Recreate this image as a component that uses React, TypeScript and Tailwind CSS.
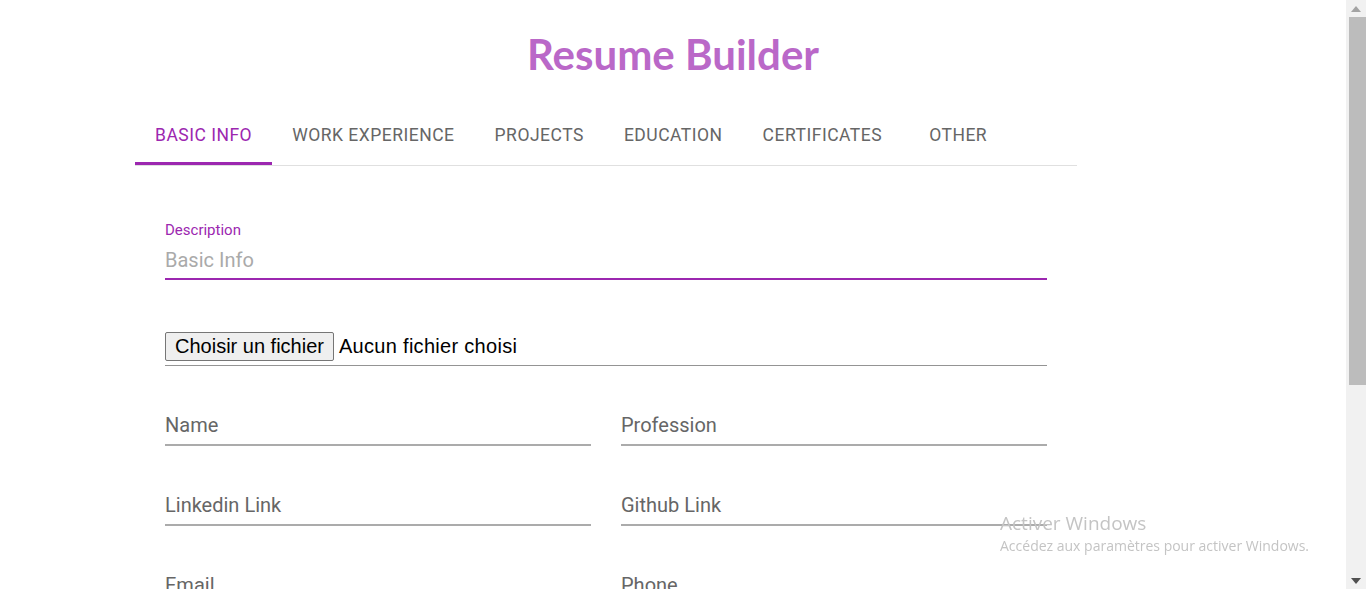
import React from 'react';

const tabs = ['BASIC INFO', 'WORK EXPERIENCE', 'PROJECTS', 'EDUCATION', 'CERTIFICATES', 'OTHER'];

const TextField: React.FC<{ label: string }> = ({ label }) => (
  <div className="flex-1 border-b-2 border-[#ababab] pb-[7px]">
    <div className="text-[20px] leading-6 text-[#666666]">{label}</div>
  </div>
);

const App: React.FC = () => (
  <div className="min-h-[900px] bg-white pr-[20px] font-['Roboto',sans-serif]">
    <h1 className="pt-[29px] text-center font-['Lato',sans-serif] text-[42px] font-bold leading-[50px] text-[#ba68c8]">
      Resume Builder
    </h1>
    <div className="mx-auto mt-[26px] w-[1076px]">
      <div className="w-[942px]">
        <div className="flex border-b border-[#e0e0e0]">
          {tabs.map((tab, i) => (
            <div
              key={tab}
              className={
                i === 0
                  ? 'flex h-[60px] min-w-[112px] items-center justify-center border-b-[3px] border-[#9c27b0] px-5 pt-[3px] text-[17.5px] tracking-[0.5px] text-[#9c27b0]'
                  : 'flex h-[60px] min-w-[112px] items-center justify-center px-5 text-[17.5px] tracking-[0.5px] text-[#666666]'
              }
            >
              {tab}
            </div>
          ))}
        </div>

        <div className="px-[30px] pt-[55px]">
          <div className="border-b-2 border-[#9c27b0] pb-[6px]">
            <div className="text-[15px] leading-[18px] text-[#9c27b0]">Description</div>
            <div className="mt-[9px] text-[20px] leading-6 text-[#aaaaaa]">Basic Info</div>
          </div>

          <div className="mt-[52px] flex items-center border-b border-[#949494] pb-[4px] font-['Liberation_Sans',sans-serif] text-[20px] text-black">
            <span className="rounded-[2px] border border-[#767676] bg-[#efefef] px-[9px] py-[2px] leading-[23px]">
              Choisir un fichier
            </span>
            <span className="ml-[5px] leading-[23px] tracking-[0.3px]">Aucun fichier choisi</span>
          </div>

          <div className="mt-[47px] flex gap-[30px]">
            <TextField label="Name" />
            <TextField label="Profession" />
          </div>
          <div className="mt-[47px] flex gap-[30px]">
            <TextField label="Linkedin Link" />
            <TextField label="Github Link" />
          </div>
          <div className="mt-[47px] flex gap-[30px]">
            <TextField label="Email" />
            <TextField label="Phone" />
          </div>
        </div>
      </div>
    </div>

    <div className="fixed left-[1000px] top-[511px] font-['Open_Sans',sans-serif] text-[#c4c4c4]">
      <div className="text-[19px] leading-[24px]">Activer Windows</div>
      <div className="mt-[1px] text-[14px] leading-[20px]">Accédez aux paramètres pour activer Windows.</div>
    </div>

    <div className="fixed right-0 top-0 flex h-screen w-[20px] flex-col items-center bg-[#f1f1f1]">
      <div className="flex h-[17px] items-center">
        <svg width="10" height="6" viewBox="0 0 10 6"><path d="M5 0 L10 6 L0 6 Z" fill="#a3a3a3" /></svg>
      </div>
      <div className="ml-[2px] h-[368px] w-[17px] bg-[#bcbcbc]" />
      <div className="flex-1" />
      <div className="flex h-[17px] items-center">
        <svg width="10" height="6" viewBox="0 0 10 6"><path d="M0 0 L10 0 L5 6 Z" fill="#505050" /></svg>
      </div>
    </div>
  </div>
);

export default App;
